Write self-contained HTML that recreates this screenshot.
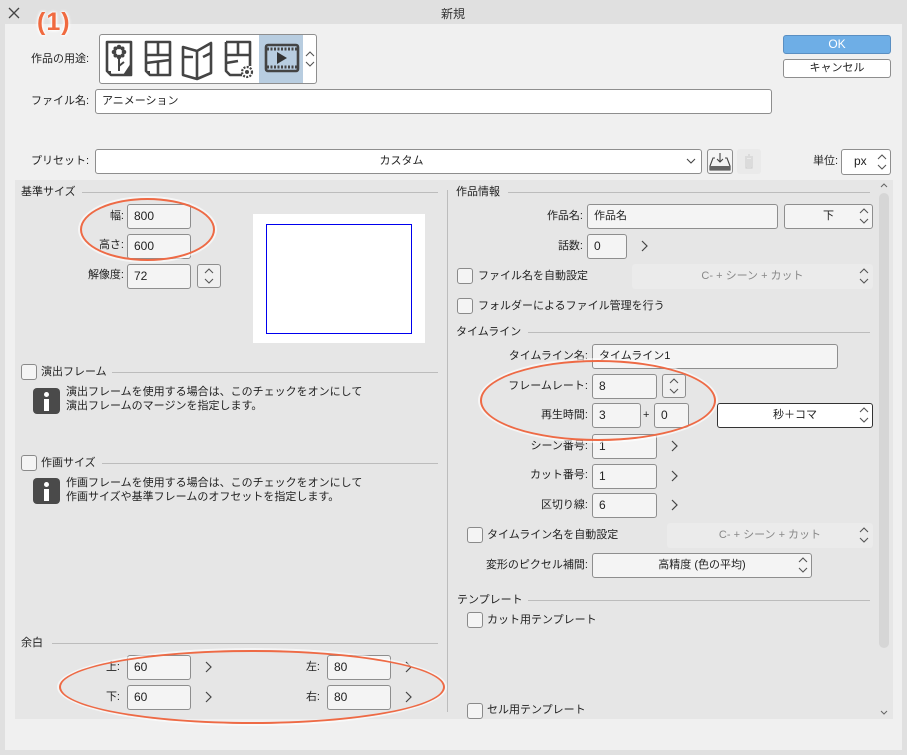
<!DOCTYPE html>
<html><head><meta charset="utf-8"><style>
*{box-sizing:border-box;margin:0;padding:0}
body{width:907px;height:755px;background:#e0e0e0;position:relative;overflow:hidden;font-family:"Liberation Sans","Noto Sans CJK JP",sans-serif;font-size:11px;color:#222}
.a{position:absolute}
.t{position:absolute;white-space:nowrap;line-height:14px}
.r{text-align:right}
.in{position:absolute;background:#f4f4f4;border:1px solid #8e8e8e;border-radius:3px;padding-left:6px;line-height:22px;font-size:12px}
.w{background:#fff}
.cb{position:absolute;width:16px;height:16px;border:1px solid #8a8a8a;border-radius:3px;background:#f4f4f4}
.ln{position:absolute;height:1px;background:#bcbcbc}
.gt{position:absolute;width:8px;height:12px}
.sp{position:absolute;width:24px;height:24px;border:1px solid #8e8e8e;border-radius:3px;background:#f0f0f0}
.ud{position:absolute;width:10px;height:20px}
.el{position:absolute;border:2.5px solid #ee6a45;border-radius:50%;box-shadow:0 0 0 2px rgba(255,255,255,.6)}
.info{position:absolute;width:27px;height:26px;background:#4a4a4a;border-radius:4px}
.info:before{content:"";position:absolute;left:11px;top:4px;width:5px;height:5px;border-radius:50%;background:#fff}
.info:after{content:"";position:absolute;left:11px;top:11px;width:5px;height:12px;background:#fff}
</style></head><body>
<svg width="0" height="0" style="position:absolute"><defs>
<symbol id="ud" viewBox="0 0 10 20"><path d="M1 7 L5 3 L9 7 M1 13 L5 17 L9 13" fill="none" stroke="#555" stroke-width="1.1"/></symbol>
<symbol id="gt" viewBox="0 0 8 12"><path d="M2 1 L7 6 L2 11" fill="none" stroke="#444" stroke-width="1.2"/></symbol>
</defs></svg>

<svg class="a" style="left:8px;top:7px" width="12" height="12"><path d="M1 1 L11 11 M11 1 L1 11" stroke="#444" stroke-width="1.3"/></svg>
<div class="t" style="left:441px;top:7px;font-size:12px;color:#333">新規</div>

<div class="a" style="left:5px;top:24px;width:897px;height:726px;background:#f0f0f0"></div>
<div class="a" style="left:15px;top:180px;width:878px;height:539px;background:#e6e6e6"></div>
<div class="a" style="left:447px;top:190px;width:1px;height:522px;background:#bcbcbc"></div>

<div class="t" style="left:37px;top:6px;font-size:25px;line-height:32px;font-weight:bold;color:#f06a40;letter-spacing:1px;text-shadow:0 0 2px #fff,0 0 3px #fff,0 0 4px #fff">(1)</div>

<div class="t" style="left:31px;top:52px">作品の用途:</div>
<div class="a" style="left:99px;top:34px;width:218px;height:50px;background:#fff;border:1px solid #8e8e8e;border-radius:3px"></div>
<div class="a" style="left:259px;top:35px;width:44px;height:48px;background:#b8cde0"></div>
<svg class="a" style="left:100px;top:35px" width="216" height="48" viewBox="0 0 216 48">
<g fill="none" stroke="#444" stroke-width="2.6" stroke-linejoin="round">
<path d="M7 7 h24 v33 h-20 l-4 -4 z"/>
<path d="M46 7 h24 v33 h-20 l-4 -4 z M46 20 h24 M58 7 v13 M46 28 l24 -3 M58 27 v13"/>
<path d="M83 12 l14 4 l14 -8 v30 l-14 6 l-14 -4 z M97 16 v28 M83 22 h10 M103 22 l8 -4"/>
<path d="M126 7 h24 v24 M126 7 v29 l4 4 h12 M126 20 h24 M138 7 v13 M126 28 l12 -2"/>
<rect x="166" y="10" width="32" height="26" rx="2"/>
</g>
<path d="M7 36 l4 4 v-4z M46 36 l4 4 v-4z M31 28 v12 h-8z" fill="#444"/>
<g fill="#444"><circle cx="19" cy="12" r="2.3"/><circle cx="19" cy="22" r="2.3"/><circle cx="14" cy="17" r="2.3"/><circle cx="24" cy="17" r="2.3"/><circle cx="15.5" cy="13.5" r="2"/><circle cx="22.5" cy="13.5" r="2"/><circle cx="15.5" cy="20.5" r="2"/><circle cx="22.5" cy="20.5" r="2"/></g>
<circle cx="19" cy="17" r="2" fill="#fff"/>
<path d="M19 22 v14 M19 31 l5 -4" stroke="#444" stroke-width="2"/>
<circle cx="147" cy="37" r="5" fill="none" stroke="#444" stroke-width="2.2" stroke-dasharray="2 1.3"/>
<circle cx="147" cy="37" r="2" fill="#444"/>
<path d="M167 14 h30 M167 32 h30" stroke="#444" stroke-width="3" stroke-dasharray="2 1.5"/>
<path d="M177 17 l10 6 l-10 6z" fill="#333"/>
</svg>
<svg class="ud" style="left:305px;top:49px"><use href="#ud"/></svg>

<div class="t" style="left:31px;top:94px">ファイル名:</div>
<div class="in w" style="left:95px;top:89px;width:677px;height:25px;font-size:11px">アニメーション</div>

<div class="a" style="left:783px;top:35px;width:108px;height:19px;background:#6eaee6;border:1px solid #5a8fc2;border-radius:3px;color:#fff;font-size:12px;text-align:center;line-height:17px">OK</div>
<div class="a" style="left:783px;top:59px;width:108px;height:19px;background:#fff;border:1px solid #8e8e8e;border-radius:3px;font-size:11px;text-align:center;line-height:17px">キャンセル</div>

<div class="t" style="left:31px;top:154px">プリセット:</div>
<div class="in w" style="left:95px;top:149px;width:607px;height:25px;text-align:center;font-size:11px">カスタム</div>
<svg class="a" style="left:686px;top:157px" width="10" height="8"><path d="M1 2 L5 6 L9 2" fill="none" stroke="#444" stroke-width="1.1"/></svg>
<div class="a" style="left:707px;top:149px;width:26px;height:25px;border:1px solid #8e8e8e;border-radius:3px;background:#f4f4f4"></div>
<svg class="a" style="left:707px;top:149px" width="26" height="25"><path d="M13 4 v9 M10 10 l3 3 l3 -3 M8 9 h-2 l-3 8 v4 h20 v-4 l-3 -8 h-2" fill="none" stroke="#444" stroke-width="1.1"/><rect x="3" y="17" width="20" height="4" fill="#666"/></svg>
<div class="a" style="left:737px;top:149px;width:24px;height:25px;background:#eaeaea;border-radius:3px"></div>
<svg class="a" style="left:737px;top:149px" width="24" height="25"><path d="M8 8 h8 M11 6 h2 M9 9 v10 h6 v-10 M11 10 v8 M13 10 v8" fill="none" stroke="#ccc" stroke-width="1"/></svg>
<div class="t" style="left:813px;top:154px">単位:</div>
<div class="in w" style="left:841px;top:149px;width:50px;height:26px;padding-left:12px">px</div>
<svg class="ud" style="left:877px;top:152px"><use href="#ud"/></svg>

<div class="a" style="left:877px;top:181px;width:14px;height:537px;background:#e6e6e6"></div>
<div class="a" style="left:879px;top:193px;width:10px;height:455px;background:#d6d6d6;border-radius:5px"></div>
<svg class="a" style="left:879px;top:181px" width="10" height="10"><path d="M2 6 L5 3 L8 6" fill="none" stroke="#666"/></svg>
<svg class="a" style="left:879px;top:707px" width="10" height="10"><path d="M2 4 L5 7 L8 4" fill="none" stroke="#666"/></svg>

<div class="t" style="left:21px;top:185px">基準サイズ</div><div class="ln" style="left:82px;top:192px;width:356px"></div>
<div class="t r" style="left:60px;top:209px;width:64px">幅:</div>
<div class="in" style="left:127px;top:204px;width:64px;height:25px">800</div>
<div class="t r" style="left:60px;top:238px;width:64px">高さ:</div>
<div class="in" style="left:127px;top:234px;width:64px;height:25px">600</div>
<div class="t r" style="left:60px;top:268px;width:64px">解像度:</div>
<div class="in" style="left:127px;top:264px;width:64px;height:25px">72</div>
<div class="sp" style="left:197px;top:264px"></div><svg class="ud" style="left:204px;top:266px"><use href="#ud"/></svg>
<div class="a" style="left:253px;top:214px;width:172px;height:129px;background:#fff"></div>
<div class="a" style="left:266px;top:224px;width:146px;height:110px;border:1px solid #0000ee"></div>
<div class="el" style="left:80px;top:198px;width:135px;height:63px"></div>

<div class="cb" style="left:21px;top:364px"></div>
<div class="t" style="left:41px;top:365px">演出フレーム</div><div class="ln" style="left:112px;top:372px;width:326px"></div>
<div class="info" style="left:33px;top:388px"></div>
<div class="t" style="left:66px;top:385px">演出フレームを使用する場合は、このチェックをオンにして</div>
<div class="t" style="left:66px;top:399px">演出フレームのマージンを指定します。</div>

<div class="cb" style="left:21px;top:455px"></div>
<div class="t" style="left:41px;top:456px">作画サイズ</div><div class="ln" style="left:102px;top:463px;width:336px"></div>
<div class="info" style="left:33px;top:478px"></div>
<div class="t" style="left:66px;top:476px">作画フレームを使用する場合は、このチェックをオンにして</div>
<div class="t" style="left:66px;top:490px">作画サイズや基準フレームのオフセットを指定します。</div>

<div class="t" style="left:21px;top:636px">余白</div><div class="ln" style="left:52px;top:643px;width:386px"></div>
<div class="t r" style="left:80px;top:660px;width:40px">上:</div>
<div class="in" style="left:127px;top:655px;width:64px;height:25px">60</div><svg class="gt" style="left:204px;top:661px"><use href="#gt"/></svg>
<div class="t r" style="left:280px;top:660px;width:40px">左:</div>
<div class="in" style="left:327px;top:655px;width:64px;height:25px">80</div><svg class="gt" style="left:404px;top:661px"><use href="#gt"/></svg>
<div class="t r" style="left:80px;top:690px;width:40px">下:</div>
<div class="in" style="left:127px;top:685px;width:64px;height:25px">60</div><svg class="gt" style="left:204px;top:691px"><use href="#gt"/></svg>
<div class="t r" style="left:280px;top:690px;width:40px">右:</div>
<div class="in" style="left:327px;top:685px;width:64px;height:25px">80</div><svg class="gt" style="left:404px;top:691px"><use href="#gt"/></svg>
<div class="el" style="left:59px;top:650px;width:386px;height:74px"></div>

<div class="t" style="left:456px;top:185px">作品情報</div><div class="ln" style="left:508px;top:192px;width:362px"></div>
<div class="t r" style="left:500px;top:209px;width:83px">作品名:</div>
<div class="in" style="left:587px;top:204px;width:191px;height:25px;font-size:11px">作品名</div>
<div class="in" style="left:784px;top:204px;width:89px;height:25px;text-align:center;padding:0;font-size:11px">下</div>
<svg class="ud" style="left:859px;top:206px"><use href="#ud"/></svg>
<div class="t r" style="left:500px;top:239px;width:83px">話数:</div>
<div class="in" style="left:587px;top:234px;width:40px;height:25px">0</div><svg class="gt" style="left:640px;top:240px"><use href="#gt"/></svg>
<div class="cb" style="left:457px;top:268px"></div>
<div class="t" style="left:478px;top:269px">ファイル名を自動設定</div>
<div class="a" style="left:632px;top:264px;width:241px;height:25px;background:#ebebeb;border-radius:3px;text-align:center;line-height:25px;color:#888;font-size:11px">C- + シーン + カット</div>
<svg class="ud" style="left:859px;top:266px"><use href="#ud"/></svg>
<div class="cb" style="left:457px;top:298px"></div>
<div class="t" style="left:478px;top:299px">フォルダーによるファイル管理を行う</div>

<div class="t" style="left:456px;top:325px">タイムライン</div><div class="ln" style="left:528px;top:332px;width:342px"></div>
<div class="t r" style="left:480px;top:349px;width:108px">タイムライン名:</div>
<div class="in" style="left:592px;top:344px;width:246px;height:25px;font-size:11px">タイムライン1</div>
<div class="t r" style="left:480px;top:379px;width:108px">フレームレート:</div>
<div class="in" style="left:592px;top:374px;width:65px;height:25px">8</div>
<div class="sp" style="left:662px;top:374px"></div><svg class="ud" style="left:669px;top:376px"><use href="#ud"/></svg>
<div class="t r" style="left:480px;top:408px;width:108px">再生時間:</div>
<div class="in" style="left:592px;top:403px;width:49px;height:25px">3</div>
<div class="t" style="left:643px;top:408px">+</div>
<div class="in" style="left:654px;top:403px;width:35px;height:25px">0</div>
<div class="in w" style="left:717px;top:403px;width:156px;height:25px;border-color:#333;text-align:center;padding:0;font-size:11px">秒＋コマ</div>
<svg class="ud" style="left:859px;top:405px"><use href="#ud"/></svg>
<div class="t r" style="left:480px;top:439px;width:108px">シーン番号:</div>
<div class="in" style="left:592px;top:434px;width:65px;height:25px">1</div><svg class="gt" style="left:670px;top:440px"><use href="#gt"/></svg>
<div class="el" style="left:480px;top:360px;width:236px;height:81px"></div>
<div class="t r" style="left:480px;top:468px;width:108px">カット番号:</div>
<div class="in" style="left:592px;top:464px;width:65px;height:25px">1</div><svg class="gt" style="left:670px;top:470px"><use href="#gt"/></svg>
<div class="t r" style="left:480px;top:498px;width:108px">区切り線:</div>
<div class="in" style="left:592px;top:493px;width:65px;height:25px">6</div><svg class="gt" style="left:670px;top:499px"><use href="#gt"/></svg>
<div class="cb" style="left:467px;top:527px"></div>
<div class="t" style="left:487px;top:528px">タイムライン名を自動設定</div>
<div class="a" style="left:667px;top:523px;width:206px;height:25px;background:#ebebeb;border-radius:3px;text-align:center;line-height:25px;color:#888;font-size:11px">C- + シーン + カット</div>
<svg class="ud" style="left:859px;top:525px"><use href="#ud"/></svg>
<div class="t r" style="left:470px;top:558px;width:118px">変形のピクセル補間:</div>
<div class="in" style="left:592px;top:553px;width:220px;height:25px;text-align:center;padding:0;font-size:11px">高精度 (色の平均)</div>
<svg class="ud" style="left:798px;top:555px"><use href="#ud"/></svg>

<div class="t" style="left:457px;top:593px">テンプレート</div><div class="ln" style="left:528px;top:600px;width:342px"></div>
<div class="cb" style="left:467px;top:612px"></div>
<div class="t" style="left:487px;top:613px">カット用テンプレート</div>
<div class="cb" style="left:467px;top:703px"></div>
<div class="t" style="left:487px;top:703px">セル用テンプレート</div>
</body></html>
